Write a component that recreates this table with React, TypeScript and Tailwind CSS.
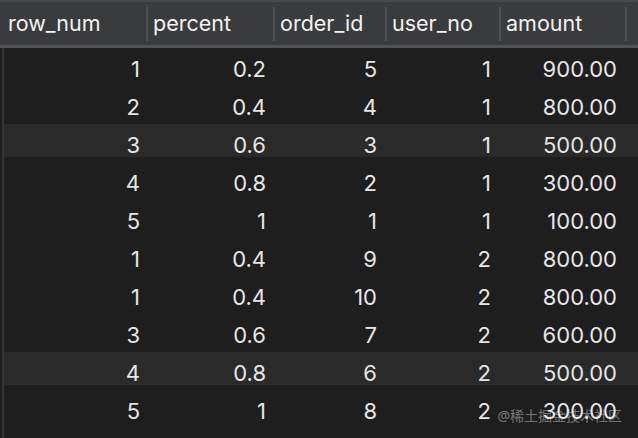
import React from 'react'

const headers = ['row_num', 'percent', 'order_id', 'user_no', 'amount']

// widths of each header cell (separator comes after each one)
const headWidths = ['w-[146px]', 'w-[125px]', 'w-[110px]', 'w-[112px]', 'w-[124px]']
const bodyWidths = ['w-[144px]', 'w-[127px]', 'w-[112px]', 'w-[114px]', 'w-[126px]']
const bodyPads = ['pr-[8px]', 'pr-[9px]', 'pr-[10px]', 'pr-[10px]', 'pr-[10px]']

const rows = [
    ['1', '0.2', '5', '1', '900.00'],
    ['2', '0.4', '4', '1', '800.00'],
    ['3', '0.6', '3', '1', '500.00'],
    ['4', '0.8', '2', '1', '300.00'],
    ['5', '1', '1', '1', '100.00'],
    ['1', '0.4', '9', '2', '800.00'],
    ['1', '0.4', '10', '2', '800.00'],
    ['3', '0.6', '7', '2', '600.00'],
    ['4', '0.8', '6', '2', '500.00'],
    ['5', '1', '8', '2', '300.00'],
]

const App = () => {
    return (
        <div className="relative w-[638px] h-[438px] overflow-hidden bg-[#1e1e1e] text-[#e6e6e6] font-['Inter',sans-serif]">
            {/* HEADER */}
            <div className="flex items-center h-[48px] bg-[#3a3b3d] border-t-2 border-t-[#47484a] border-b-[3px] border-b-[#505153]">
                {headers.map((h, i) => (
                    <React.Fragment key={h}>
                        <div className={`${headWidths[i]} ${i === 0 ? 'pl-[8px]' : 'pl-[5px]'} text-[21.5px] leading-none text-[#f2f2f2] pt-[1px]`}>
                            {h}
                        </div>
                        <div className="w-[2px] h-[34px] bg-[#4f5053]" />
                    </React.Fragment>
                ))}
            </div>

            {/* BODY */}
            <div className="ml-[2px] border-l-2 border-[#343434] h-[390px]">
                {rows.map((r, ri) => (
                    <div
                        key={ri}
                        className={`flex h-[33px] mb-[5px] leading-[43px] text-[22px] ${ri === 2 || ri === 8 ? 'bg-[#2a2a2a]' : ''}`}>
                        {r.map((v, ci) => (
                            <div key={ci} className={`${bodyWidths[ci]} ${bodyPads[ci]} text-right`}>
                                {v}
                            </div>
                        ))}
                    </div>
                ))}
            </div>

            {/* WATERMARK */}
            <div className="absolute right-[16px] bottom-[15px] text-[14px] leading-none text-white/40 font-['Noto_Sans','Noto_Sans_CJK_SC',sans-serif]">
                @稀土掘金技术社区
            </div>
        </div>
    )
}

export default App
